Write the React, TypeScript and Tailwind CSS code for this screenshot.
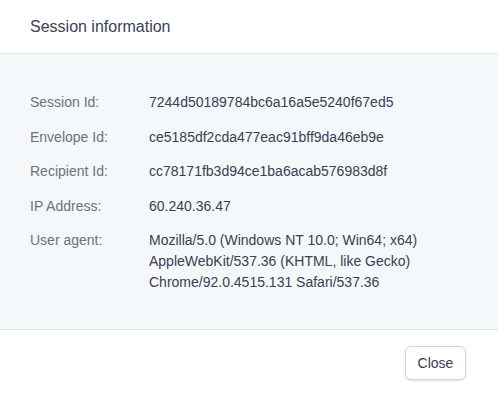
const rows: { label: string; value: string[] }[] = [
  { label: "Session Id:", value: ["7244d50189784bc6a16a5e5240f67ed5"] },
  { label: "Envelope Id:", value: ["ce5185df2cda477eac91bff9da46eb9e"] },
  { label: "Recipient Id:", value: ["cc78171fb3d94ce1ba6acab576983d8f"] },
  { label: "IP Address:", value: ["60.240.36.47"] },
  {
    label: "User agent:",
    value: [
      "Mozilla/5.0 (Windows NT 10.0; Win64; x64)",
      "AppleWebKit/537.36 (KHTML, like Gecko)",
      "Chrome/92.0.4515.131 Safari/537.36",
    ],
  },
];

export default function App() {
  return (
    <div className="w-[498px] h-[393px] bg-white flex flex-col font-['Liberation_Sans',Arial,sans-serif]">
      {/* Header */}
      <div className="h-[54px] shrink-0 flex items-center px-[30px] border-b border-[#e3e6ea]">
        <h2 className="text-base text-[#3b4250] pt-px">Session information</h2>
      </div>

      {/* Body */}
      <div className="h-[276px] shrink-0 bg-[#f5f8fb] border-b border-[#e3e6ea] px-[30px] pt-[38px] pb-[36px]">
        <div className="grid grid-cols-[119px_1fr] gap-y-[13.5px] text-sm leading-[21px]">
          {rows.map((r) => (
            <div key={r.label} className="contents">
              <div className="text-[#6b7280]">{r.label}</div>
              <div className="text-[#374151]">
                {r.value.map((line) => (
                  <div key={line}>{line}</div>
                ))}
              </div>
            </div>
          ))}
        </div>
      </div>

      {/* Footer */}
      <div className="flex-1 flex items-center justify-end pr-[32px] pt-[2px]">
        <button className="w-[61px] h-[34px] rounded-md border border-[#d1d5db] bg-white text-sm text-[#374151] shadow-sm">
          Close
        </button>
      </div>
    </div>
  );
}
